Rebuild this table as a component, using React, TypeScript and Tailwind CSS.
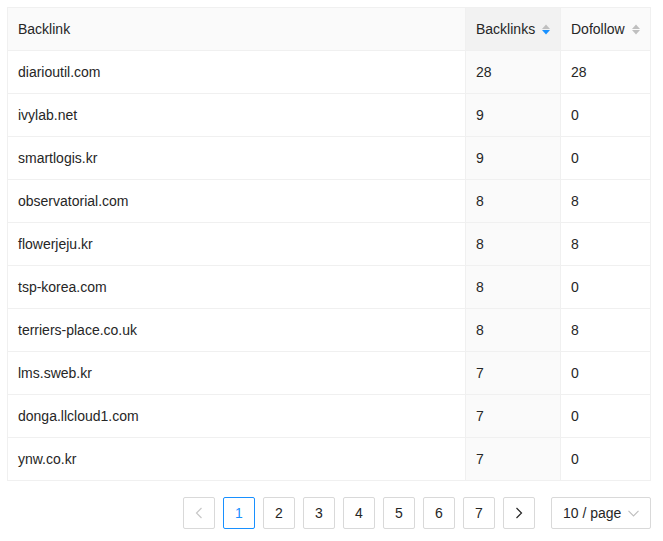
import React from 'react';

type Row = { site: string; backlinks: number; dofollow: number };

const rows: Row[] = [
  { site: 'diarioutil.com', backlinks: 28, dofollow: 28 },
  { site: 'ivylab.net', backlinks: 9, dofollow: 0 },
  { site: 'smartlogis.kr', backlinks: 9, dofollow: 0 },
  { site: 'observatorial.com', backlinks: 8, dofollow: 8 },
  { site: 'flowerjeju.kr', backlinks: 8, dofollow: 8 },
  { site: 'tsp-korea.com', backlinks: 8, dofollow: 0 },
  { site: 'terriers-place.co.uk', backlinks: 8, dofollow: 8 },
  { site: 'lms.sweb.kr', backlinks: 7, dofollow: 0 },
  { site: 'donga.llcloud1.com', backlinks: 7, dofollow: 0 },
  { site: 'ynw.co.kr', backlinks: 7, dofollow: 0 },
];

// up/down carets, "active" colours the down one blue
const Sorter: React.FC<{ active?: boolean }> = ({ active }) => (
  <svg width="8" height="11" viewBox="0 0 8 11" className="shrink-0">
    <polygon points="4,0.5 8,5 0,5" fill="#bfbfbf" />
    <polygon points="0,6 8,6 4,10.5" fill={active ? '#1890ff' : '#bfbfbf'} />
  </svg>
);

const Chevron: React.FC<{ dir: 'left' | 'right'; color: string }> = ({ dir, color }) => (
  <svg width="8" height="12" viewBox="0 0 8 12">
    <polyline
      points={dir === 'left' ? '6.5,1 1.5,6 6.5,11' : '1.5,1 6.5,6 1.5,11'}
      fill="none"
      stroke={color}
      strokeWidth="1.2"
    />
  </svg>
);

export default function App() {
  const pages = [1, 2, 3, 4, 5, 6, 7];

  return (
    <div
      className="pl-[7px] pt-[7px] w-[663px] h-[541px] bg-white text-[14px] text-[#262626]"
      style={{ fontFamily: '"Liberation Sans", Arial, sans-serif' }}
    >
      <div className="w-[644px] border border-[#f0f0f0]">
        {/* Header */}
        <div className="flex h-[43px] border-b border-[#f0f0f0] bg-[#fafafa]">
          <div className="w-[458px] px-[10px] flex items-center border-r border-[#f0f0f0]">Backlink</div>
          <div className="w-[95px] px-[10px] flex items-center justify-between border-r border-[#f0f0f0] bg-[#f2f2f2]">
            <span>Backlinks</span>
            <Sorter active />
          </div>
          <div className="flex-1 px-[10px] flex items-center justify-between">
            <span>Dofollow</span>
            <Sorter />
          </div>
        </div>

        {/* Body */}
        {rows.map((r, i) => (
          <div
            key={r.site}
            className={`flex ${i < rows.length - 1 ? 'h-[43px] border-b border-[#f0f0f0]' : 'h-[42px]'}`}
          >
            <div className="w-[458px] px-[10px] flex items-center border-r border-[#f0f0f0]">{r.site}</div>
            <div className="w-[95px] px-[10px] flex items-center border-r border-[#f0f0f0] bg-[#fafafa]">
              {r.backlinks}
            </div>
            <div className="flex-1 px-[10px] flex items-center">{r.dofollow}</div>
          </div>
        ))}
      </div>

      {/* Pagination */}
      <div className="w-[644px] flex justify-end items-center gap-2 mt-4">
        <div className="w-8 h-8 flex items-center justify-center border border-[#d9d9d9] rounded-[2px]">
          <Chevron dir="left" color="#c8c8c8" />
        </div>
        {pages.map(p => (
          <div
            key={p}
            className={`w-8 h-8 flex items-center justify-center border rounded-[2px] ${
              p === 1 ? 'border-[#1890ff] text-[#1890ff]' : 'border-[#d9d9d9]'
            }`}
          >
            {p}
          </div>
        ))}
        <div className="w-8 h-8 flex items-center justify-center border border-[#d9d9d9] rounded-[2px]">
          <Chevron dir="right" color="#262626" />
        </div>
        <div className="ml-2 w-[100px] h-8 px-[11px] flex items-center justify-between border border-[#d9d9d9] rounded-[2px]">
          <span>10 / page</span>
          <svg width="11" height="7" viewBox="0 0 11 7">
            <polyline points="0.5,0.8 5.5,6 10.5,0.8" fill="none" stroke="#bfbfbf" strokeWidth="1.1" />
          </svg>
        </div>
      </div>
    </div>
  );
}
